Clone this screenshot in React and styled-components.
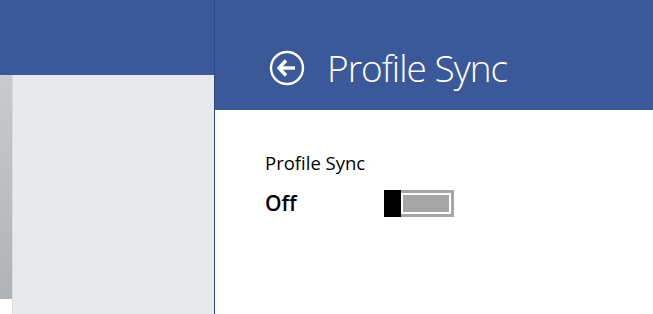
import React, { useState } from "react";
import styled, { createGlobalStyle } from "styled-components";

const Global = createGlobalStyle`
  html, body { margin: 0; padding: 0; }
  body {
    width: 653px;
    height: 314px;
    overflow: hidden;
    background: #ffffff;
    font-family: "Open Sans", "Noto Sans", sans-serif;
  }
`;

const Screen = styled.div`
  display: flex;
  width: 653px;
  height: 314px;
`;

const LeftPane = styled.div`
  width: 214px;
  display: flex;
  flex-direction: column;
`;

const LeftHeader = styled.div`
  height: 75px;
  background: #3b5998;
`;

const LeftBody = styled.div`
  flex: 1;
  display: flex;
`;

const Strip = styled.div`
  width: 13px;
  height: 224px;
  background: linear-gradient(#c9cacc, #b1b2b4);
`;

const Panel = styled.div`
  flex: 1;
  background: #e8e9ed;
  border-left: 1px solid #dcdde0;
  margin-left: -1px;
`;

const Divider = styled.div`
  width: 1px;
  background: #2b4a8c;
`;

const RightPane = styled.div`
  flex: 1;
  display: flex;
  flex-direction: column;
`;

const Header = styled.header`
  height: 110px;
  box-sizing: border-box;
  background: #3b5998;
  display: flex;
  align-items: flex-start;
  padding: 49px 0 0 54px;
  gap: 22px;
  color: #fff;
`;

const BackButton = styled.button`
  width: 36px;
  height: 36px;
  padding: 0;
  margin-top: 1px;
  border: none;
  background: none;
  cursor: pointer;
  display: flex;
`;

const Title = styled.h1`
  margin: 0;
  font-size: 37px;
  font-weight: 300;
  letter-spacing: -1px;
  line-height: 1;
`;

const Content = styled.div`
  padding: 42px 0 0 50px;
  color: #000;
`;

const Label = styled.div`
  font-size: 18.5px;
  font-weight: 400;
  line-height: 22px;
`;

const Row = styled.div`
  display: flex;
  align-items: center;
  margin-top: 16px;
`;

const State = styled.div`
  width: 119px;
  font-size: 21px;
  font-weight: 600;
  line-height: 27px;
`;

const Switch = styled.button`
  width: 70px;
  height: 27px;
  padding: 0;
  border: none;
  display: flex;
  flex-direction: ${(p) => (p.$on ? "row-reverse" : "row")};
  background: #a6a6a6;
  cursor: pointer;
`;

const Thumb = styled.span`
  width: 17px;
  background: #000;
`;

const Track = styled.span`
  flex: 1;
  margin: 3px 3px 3px 0;
  border: 2px solid #fff;
  background: ${(p) => (p.$on ? "#3b5998" : "#a6a6a6")};
`;

function BackIcon() {
  return (
    <svg width="36" height="36" viewBox="0 0 36 36" fill="none" stroke="#fff">
      <circle cx="18" cy="18" r="16" strokeWidth="2.4" />
      <path d="M10 18h16" strokeWidth="3.4" />
      <path d="M17 10.5L10 18l7 7.5" strokeWidth="3.4" />
    </svg>
  );
}

export default function App() {
  const [on, setOn] = useState(false);

  return (
    <Screen>
      <Global />
      <LeftPane>
        <LeftHeader />
        <LeftBody>
          <Strip />
          <Panel />
        </LeftBody>
      </LeftPane>
      <Divider />
      <RightPane>
        <Header>
          <BackButton aria-label="Back"><BackIcon /></BackButton>
          <Title>Profile Sync</Title>
        </Header>
        <Content>
          <Label>Profile Sync</Label>
          <Row>
            <State>{on ? "On" : "Off"}</State>
            <Switch $on={on} onClick={() => setOn(!on)}>
              <Thumb />
              <Track $on={on} />
            </Switch>
          </Row>
        </Content>
      </RightPane>
    </Screen>
  );
}
